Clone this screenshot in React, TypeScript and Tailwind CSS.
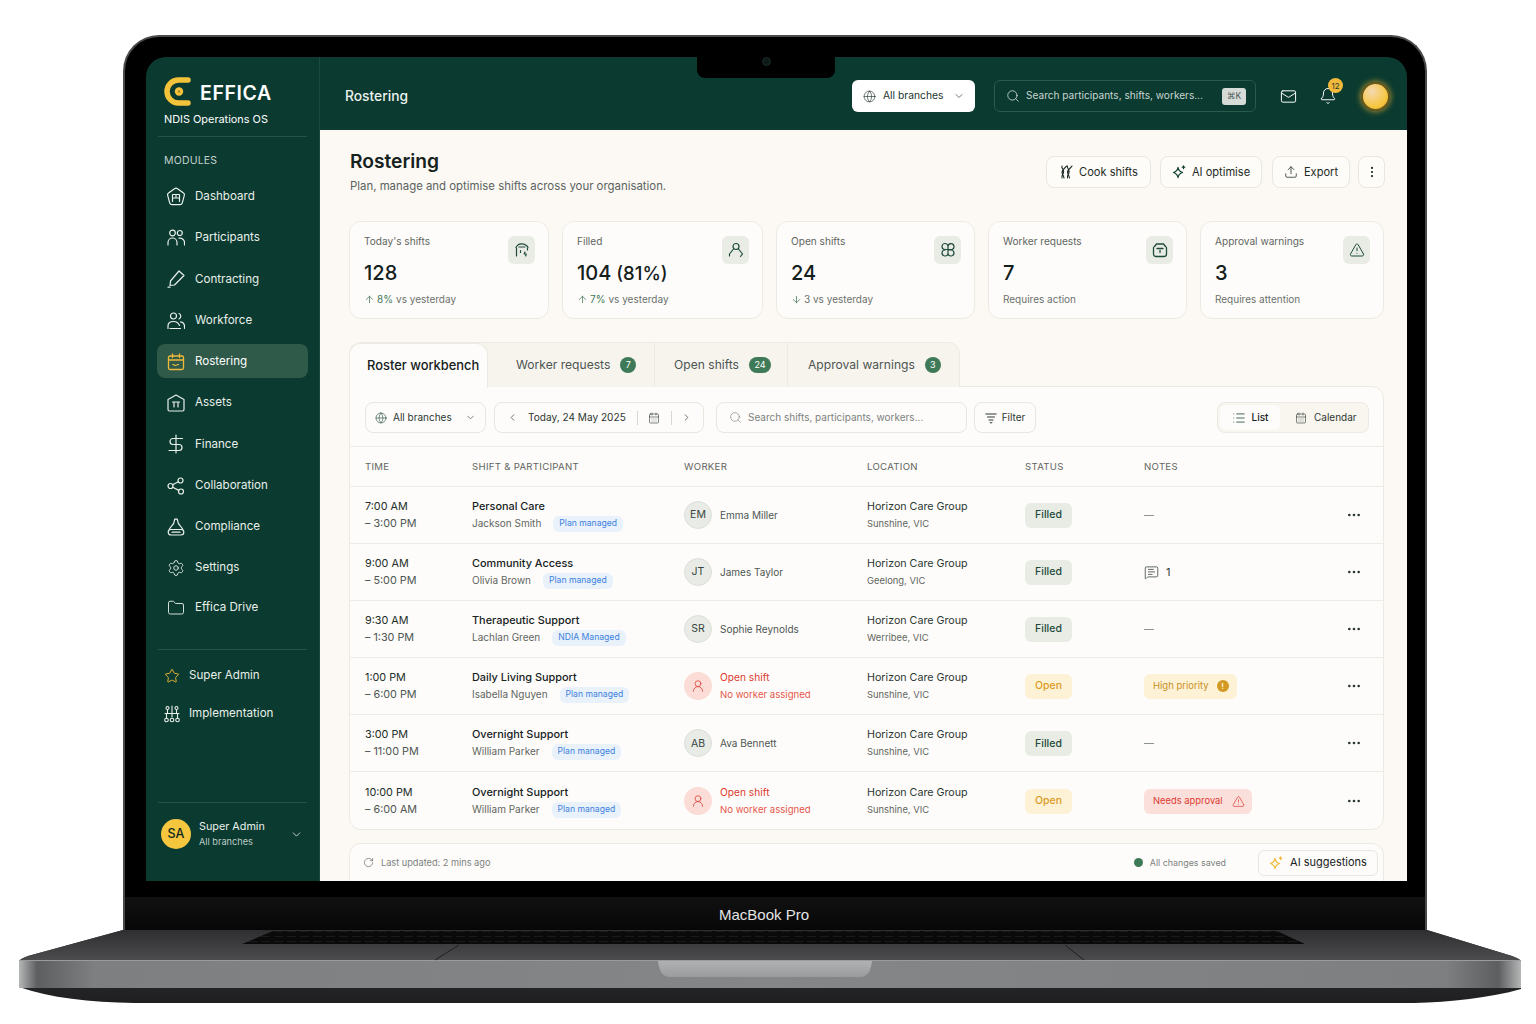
import {
  ArrowDown,
  ArrowUp,
  CalendarDays,
  ChevronDown,
  ChevronLeft,
  ChevronRight,
  EllipsisVertical,
  Folder,
  Globe,
  List,
  Mail,
  Bell,
  MessageSquareText,
  MoreHorizontal,
  RotateCw,
  Search,
  Settings,
  Star,
  TriangleAlert,
  Upload,
  UserRound,
} from 'lucide-react'

const icon = { fill: 'none', stroke: 'currentColor', strokeLinecap: 'round', strokeLinejoin: 'round' } as const

function DashIcon() {
  return (
    <svg width="20" height="20" viewBox="0 0 20 20" strokeWidth="1.2" {...icon}>
      <path d="M8.500 1.800a2.500 2.500 0 0 1 3 0l6 4.300a2 2 0 0 1 .8 2.200l-2 7.500a2.500 2.500 0 0 1-2.400 1.900H6.100a2.500 2.500 0 0 1-2.400-1.900l-2-7.500a2 2 0 0 1 .8-2.200z" />
      <path d="M6.500 14.500V7.500h7v7M6.500 11h7M10 7.500V11" />
    </svg>
  )
}

function PeopleIcon() {
  return (
    <svg width="18" height="18" viewBox="0 0 18 18" strokeWidth="1.2" {...icon}>
      <circle cx="5.500" cy="4" r="2.800" />
      <circle cx="12.800" cy="4" r="2.500" />
      <path d="M1 16v-2.500C1 11 3 9 5.500 9S10 11 10 13.500V16M12 9.200c3 -.4 5.500 1.600 5.500 4.300V16" />
    </svg>
  )
}

function PenIcon() {
  return (
    <svg width="18" height="18" viewBox="0 0 18 18" strokeWidth="1.2" {...icon}>
      <path d="m12 1 5 4.500-9.500 9.500-4.500.5.500-4.500z" />
      <path d="M1 17.200h2" />
    </svg>
  )
}

function WorkforceIcon() {
  return (
    <svg width="18" height="18" viewBox="0 0 18 18" strokeWidth="1.2" {...icon}>
      <circle cx="6.500" cy="4" r="3" />
      <path d="M12 1.500a3 3 0 0 1 0 5.500M1 16.500v-2.500C1 11 3.500 9.500 6.500 9.500s5 1.500 6 4M3 16.500h10.500M13.500 9.800c2.500.5 4 2 4 4.500v2" />
    </svg>
  )
}

function RosterIcon() {
  return (
    <svg width="18" height="18" viewBox="0 0 18 18" strokeWidth="1.3" {...icon}>
      <rect x="1.500" y="3" width="15" height="13.500" rx="1.500" />
      <path d="M1.500 7h15M5.500 1v3.500M12.500 1v3.500M6 11.500l2 1 3.500-1" />
    </svg>
  )
}

function AssetIcon() {
  return (
    <svg width="18" height="18" viewBox="0 0 18 18" strokeWidth="1.2" {...icon}>
      <path d="M9 1 17 5.500V15.500a1.500 1.500 0 0 1-1.500 1.500h-13A1.500 1.500 0 0 1 1 15.500V5.500z" />
      <path d="M5.500 8h7M7 8v5M11 8v5" />
    </svg>
  )
}

function FinanceIcon() {
  return (
    <svg width="18" height="20" viewBox="0 0 18 20" strokeWidth="1.2" {...icon}>
      <path d="M15.500 4.500H6a3 3 0 0 0 0 6h6a3 3 0 0 1 0 6H2M9 1v18" />
    </svg>
  )
}

function CollabIcon() {
  return (
    <svg width="18" height="18" viewBox="0 0 18 18" strokeWidth="1.2" {...icon}>
      <circle cx="3.500" cy="9" r="2.500" />
      <circle cx="13.500" cy="3.500" r="2.500" />
      <circle cx="14" cy="14.500" r="2.500" />
      <path d="m5.700 7.800 5.600-3.100M5.700 10.200l6.100 3.200" />
    </svg>
  )
}

function BellFlaskIcon() {
  return (
    <svg width="18" height="18" viewBox="0 0 18 18" strokeWidth="1.2" {...icon}>
      <path d="M9 .8C7.800.8 7.300 1.800 7.300 3c0 3.800-4.300 5.500-5 8.500h13.400c-.7-3-5-4.700-5-8.500C10.700 1.800 10.200.8 9 .8z" />
      <rect x="1.200" y="11.500" width="15.600" height="5.500" rx="2.700" />
      <path d="M5 14.200h8" />
    </svg>
  )
}

function NodesIcon() {
  return (
    <svg width="16" height="18" viewBox="0 0 16 18" strokeWidth="1.1" {...icon}>
      <circle cx="3.500" cy="3" r="1.500" />
      <circle cx="12.500" cy="3" r="1.500" />
      <circle cx="2.500" cy="15" r="1.800" />
      <circle cx="8" cy="15" r="1.800" />
      <circle cx="13.500" cy="15" r="1.800" />
      <path d="M8 1v11M1 8.500h14M3.500 5v3.500M12.500 5v3.500M2.500 8.500v4.700M13.500 8.500v4.700" />
    </svg>
  )
}

function CookIcon() {
  return (
    <svg width="14" height="14" viewBox="0 0 14 14" strokeWidth="1.100" {...icon}>
      <path d="M3 1c-1.200 2.500 2.500 3.500 1.500 6.500C4 9.500 2.500 10.500 3 13M7.500 1C6.500 3 3 4.500 3 7c0 2 1.500 3.500 2 6M8.500 1c-1 2.500 2.500 3.500 1.500 6.500-.5 2-2 3-1.500 5.500M13 1c-1 2-4.500 3.500-4.500 6 0 2 1.500 3.500 2 6" />
    </svg>
  )
}

function Sparkle({ className }: { className?: string }) {
  return (
    <svg width="14" height="14" viewBox="0 0 14 14" className={className} strokeWidth="1.300" {...icon}>
      <path d="M6 2.500C6.500 5.500 7.500 6.500 10.500 7.500 7.500 8.500 6.500 9.500 6 12.500 5.500 9.500 4.500 8.500 1.500 7.500 4.500 6.500 5.500 5.500 6 2.500z" />
      <path d="M11.500 1v2.500M10.300 2.200h2.400" />
    </svg>
  )
}

function ShiftTileIcon() {
  return (
    <svg width="16" height="16" viewBox="0 0 16 16" strokeWidth="1.200" {...icon}>
      <path d="M2 5.500c.5-2 2-2 2.500-3 1-.8 5-.8 6.500 0 .5 1 2.500 1 3 3M2.500 6v8M13.500 6v2M5 5h6M11 10l-.8 2h2l-.5 2M6.500 8.500v2" />
    </svg>
  )
}

function FilledTileIcon() {
  return (
    <svg width="16" height="16" viewBox="0 0 16 16" strokeWidth="1.200" {...icon}>
      <circle cx="8" cy="4.500" r="3" />
      <path d="M5.500 7 1.500 12v2M10.500 7l4 5-2 2.500" />
    </svg>
  )
}

function OpenTileIcon() {
  return (
    <svg width="16" height="16" viewBox="0 0 16 16" strokeWidth="1.200" {...icon}>
      <path d="M8 8V4.500a3 3 0 1 0-3 3h7a3 3 0 1 0-4-3M8 8v3.500a3 3 0 1 1-3-3.500M8 8h3a3 3 0 1 1-3 3.500" />
    </svg>
  )
}

function RequestTileIcon() {
  return (
    <svg width="16" height="16" viewBox="0 0 16 16" strokeWidth="1.300" {...icon}>
      <path d="M4.500 2h7l2 2.500a1.500 1.500 0 0 1 1 1.500v6a2.500 2.500 0 0 1-2.500 2.500H4A2.500 2.500 0 0 1 1.500 12V6a1.500 1.500 0 0 1 1-1.500z" />
      <path d="M5 6.500h6M8 8.500v2" />
    </svg>
  )
}

const navItems = [
  { label: 'Dashboard', icon: <DashIcon />, h: 'h-[41.3px]' },
  { label: 'Participants', icon: <PeopleIcon />, h: 'h-[41.3px]' },
  { label: 'Contracting', icon: <PenIcon />, h: 'h-[41.3px]' },
  { label: 'Workforce', icon: <WorkforceIcon />, h: 'h-[41.3px]' },
  { label: 'Rostering', icon: <RosterIcon />, h: 'h-[41.3px]', active: true },
  { label: 'Assets', icon: <AssetIcon />, h: 'h-[41.3px]' },
  { label: 'Finance', icon: <FinanceIcon />, h: 'h-[41.3px]' },
  { label: 'Collaboration', icon: <CollabIcon />, h: 'h-[41.3px]' },
  { label: 'Compliance', icon: <BellFlaskIcon />, h: 'h-[41.3px]' },
  { label: 'Settings', icon: <Settings size={18} strokeWidth={1.2} />, h: 'h-[40px]' },
  { label: 'Effica Drive', icon: <Folder size={18} strokeWidth={1.2} />, h: 'h-[40px]' },
]

const stats = [
  { title: "Today's shifts", value: '128', suffix: '', icon: <ShiftTileIcon />, dir: 'up', delta: '8%', note: 'vs yesterday', w: 'w-[200px]' },
  { title: 'Filled', value: '104', suffix: ' (81%)', icon: <FilledTileIcon />, dir: 'up', delta: '7%', note: 'vs yesterday', w: 'w-[201px]' },
  { title: 'Open shifts', value: '24', suffix: '', icon: <OpenTileIcon />, dir: 'down', delta: '', note: '3 vs yesterday', w: 'w-[199px]' },
  { title: 'Worker requests', value: '7', suffix: '', icon: <RequestTileIcon />, dir: '', delta: '', note: 'Requires action', w: 'w-[199px]' },
  { title: 'Approval warnings', value: '3', suffix: '', icon: <TriangleAlert size={16} strokeWidth={1.5} />, dir: '', delta: '', note: 'Requires attention', w: 'w-[184px]' },
]

const rows = [
  { from: '7:00 AM', to: '3:00 PM', shift: 'Personal Care', who: 'Jackson Smith', plan: 'Plan managed', initials: 'EM', worker: 'Emma Miller', city: 'Sunshine, VIC', status: 'Filled', note: 'dash' },
  { from: '9:00 AM', to: '5:00 PM', shift: 'Community Access', who: 'Olivia Brown', plan: 'Plan managed', initials: 'JT', worker: 'James Taylor', city: 'Geelong, VIC', status: 'Filled', note: 'comment' },
  { from: '9:30 AM', to: '1:30 PM', shift: 'Therapeutic Support', who: 'Lachlan Green', plan: 'NDIA Managed', initials: 'SR', worker: 'Sophie Reynolds', city: 'Werribee, VIC', status: 'Filled', note: 'dash' },
  { from: '1:00 PM', to: '6:00 PM', shift: 'Daily Living Support', who: 'Isabella Nguyen', plan: 'Plan managed', initials: '', worker: '', city: 'Sunshine, VIC', status: 'Open', note: 'priority' },
  { from: '3:00 PM', to: '11:00 PM', shift: 'Overnight Support', who: 'William Parker', plan: 'Plan managed', initials: 'AB', worker: 'Ava Bennett', city: 'Sunshine, VIC', status: 'Filled', note: 'dash' },
  { from: '10:00 PM', to: '6:00 AM', shift: 'Overnight Support', who: 'William Parker', plan: 'Plan managed', initials: '', worker: '', city: 'Sunshine, VIC', status: 'Open', note: 'approval' },
]

function Sidebar() {
  return (
    <aside className="w-[174px] shrink-0 bg-[#0a3a30] border-r border-[#1d4a40] flex flex-col text-[#e9efe9]">
      <div className="pl-[18px] pt-[19px]">
        <div className="flex items-center gap-[9px]">
          <svg width="27" height="31" viewBox="0 0 27 31" fill="none">
            <path d="M24 4H14.500a11 11 0 0 0 0 23H24" stroke="#f5c33b" strokeWidth="5.500" strokeLinecap="round" />
            <circle cx="15" cy="15.500" r="4.200" fill="#f5c33b" />
            <circle cx="15" cy="15.500" r="1.300" fill="#b9851d" />
          </svg>
          <span className="text-[19.5px] leading-none font-semibold tracking-[0.6px] text-white mt-[5px]">EFFICA</span>
        </div>
        <div className="text-[10.9px] leading-4 mt-[4px] text-white">NDIS Operations OS</div>
      </div>
      <div className="mx-3 mt-[9px] border-t border-[#25524a]" />
      <div className="pl-[18px] mt-[18px] text-[10.5px] leading-3 tracking-[0.2px] text-[#c3d1cb]">MODULES</div>
      <nav className="mt-[9px] px-[11px]">
        {navItems.map(item => (
          <div key={item.label} className={`${item.h} flex items-center`}>
            <div
              className={`w-[151px] h-[34px] flex items-center gap-[9px] pl-[9px] rounded-lg text-[11.6px] ${
                item.active ? 'bg-[#2f5a4a] text-white -mt-[2px] pt-[2px]' : 'text-[#e9efe9]'
              }`}
            >
              <span className={`w-[20px] flex justify-center ${item.active ? 'text-[#f0b93a]' : ''}`}>{item.icon}</span>
              {item.label}
            </div>
          </div>
        ))}
      </nav>
      <div className="mx-3 mt-[21px] border-t border-[#25524a]" />
      <div className="px-[18px] mt-[7px] text-[11.6px]">
        <div className="h-[38px] flex items-center gap-[9px]">
          <Star size={16} strokeWidth={1.4} className="text-[#f0b93a]" />
          Super Admin
        </div>
        <div className="h-[38px] flex items-center gap-[9px]">
          <NodesIcon />
          Implementation
        </div>
      </div>
      <div className="mt-auto mx-3 border-t border-[#25524a]" />
      <div className="h-[78px] flex items-center pl-[15px] pr-[16px] pb-[16px]">
        <div className="w-[30px] h-[30px] rounded-full bg-[#f6c63f] text-[#10261f] text-[12.5px] font-medium flex items-center justify-center">SA</div>
        <div className="ml-[8px] flex-1">
          <div className="text-[10.8px] leading-[15px]">Super Admin</div>
          <div className="text-[9.2px] leading-[15px] text-[#bccbc5]">All branches</div>
        </div>
        <ChevronDown size={13} strokeWidth={1.5} />
      </div>
    </aside>
  )
}

function TopBar() {
  return (
    <header className="h-[73px] shrink-0 bg-[#0a3a30] flex items-center pl-[25px] pt-[5px] text-white">
      <div className="text-[13.8px] font-medium text-[#edf2ee]">Rostering</div>
      <div className="ml-auto flex items-center">
        <button className="w-[123px] h-[32px] bg-white rounded-md flex items-center pl-[11px] text-[10.3px] text-[#23352e]">
          <Globe size={13} strokeWidth={1.2} />
          <span className="ml-[7px]">All branches</span>
          <ChevronDown size={12} strokeWidth={1.3} className="ml-[10px]" />
        </button>
        <div className="ml-[19px] w-[262px] h-[32px] rounded-md border border-[#2c5a4e] flex items-center pl-[11px] pr-[9px] text-[10.1px] text-[#c9d6d0]">
          <Search size={14} strokeWidth={1.3} className="text-[#e6ece8]" />
          <span className="ml-[6px]">Search participants, shifts, workers...</span>
          <span className="ml-auto w-[24px] h-[17px] bg-[#d6dbd7] rounded-[3px] text-[8.5px] text-[#4f5a55] flex items-center justify-center">⌘K</span>
        </div>
        <Mail size={17} strokeWidth={1.4} className="ml-[24px]" />
        <div className="relative ml-[22px]">
          <Bell size={18} strokeWidth={1.3} />
          <span className="absolute -top-[9px] left-[9px] w-[15px] h-[15px] rounded-full bg-[#f2b93b] text-[#263b2c] text-[8px] flex items-center justify-center">12</span>
        </div>
        <div className="ml-[24px] mr-[17px] w-[29px] h-[29px] rounded-full border-2 border-[#6c5a1c] bg-[radial-gradient(circle_at_35%_30%,#f6d9b0,#f6c63f_65%,#e8b12c)] shadow-[0_0_6px_#c9a02f]" />
      </div>
    </header>
  )
}

function PageHeader() {
  return (
    <div className="flex items-start pl-[1px]">
      <div>
        <h1 className="text-[19.2px] leading-[26px] font-semibold text-[#16221d]">Rostering</h1>
        <p className="mt-[4px] text-[11.4px] leading-4 text-[#5a635f]">Plan, manage and optimise shifts across your organisation.</p>
      </div>
      <div className="ml-auto -mr-px flex text-[11.1px] text-[#1d2b26] mt-[8px]">
        <button className="w-[105px] h-[32px] border border-[#e9e6df] rounded-lg bg-[#fefcf9] flex items-center justify-center gap-[6px]">
          <CookIcon />
          Cook shifts
        </button>
        <button className="ml-[9px] w-[102px] h-[32px] border border-[#e9e6df] rounded-lg bg-[#fefcf9] flex items-center justify-center gap-[6px]">
          <Sparkle className="text-[#0f4034]" />
          AI optimise
        </button>
        <button className="ml-[10px] w-[78px] h-[32px] border border-[#e9e6df] rounded-lg bg-[#fefcf9] flex items-center justify-center gap-[6px]">
          <Upload size={14} strokeWidth={1.3} />
          Export
        </button>
        <button className="ml-[8px] w-[27px] h-[32px] border border-[#e9e6df] rounded-lg bg-[#fefcf9] flex items-center justify-center">
          <EllipsisVertical size={14} strokeWidth={1.8} />
        </button>
      </div>
    </div>
  )
}

function StatCards() {
  return (
    <div className="mt-[27px] flex gap-[13px]">
      {stats.map(s => (
        <div key={s.title} className={`${s.w} h-[98px] border border-[#ecebe3] rounded-xl bg-[#fefcfa] pl-[14px] pr-[13px] pt-[13px] flex`}>
          <div className="flex-1">
            <div className="text-[10.1px] leading-[12px] text-[#5f6661]">{s.title}</div>
            <div className="mt-[13px] text-[20px] leading-[26px] font-medium text-[#14201b]">
              {s.value}
              {s.suffix && <span className="text-[18.5px]">{s.suffix}</span>}
            </div>
            <div className="mt-[6px] text-[10px] leading-[14px] text-[#6b726e] flex items-center">
              {s.dir === 'up' && <ArrowUp size={11} strokeWidth={1.5} className="text-[#2f6a4a] mr-[2px]" />}
              {s.dir === 'down' && <ArrowDown size={11} strokeWidth={1.5} className="text-[#2f6a4a] mr-[2px]" />}
              {s.delta && <span className="text-[#3f7a58] mr-[3px]">{s.delta}</span>}
              {s.note}
            </div>
          </div>
          <div className="mt-[1px] w-[27px] h-[28px] rounded-md bg-[#e9ece5] text-[#1e4a3c] flex items-center justify-center">{s.icon}</div>
        </div>
      ))}
    </div>
  )
}

function Tabs() {
  return (
    <div className="mt-[23px] w-[611px] h-[45px] flex bg-[#f7f3ed] border border-b-0 border-[#ecebe3] rounded-t-xl relative z-10 text-[12.1px] text-[#4d5652]">
      <div className="w-[139px] -ml-px h-[45px] bg-[#fefcfa] border border-b-0 border-[#ecebe3] rounded-t-xl flex items-center pl-[17px] text-[12.9px] font-medium text-[#15211c]">Roster workbench</div>
      <div className="w-[167px] flex items-center pl-[28px] border-r border-[#ecebe3]">
        Worker requests
        <span className="ml-[10px] w-[16px] h-[16px] rounded-full bg-[#3f7a58] text-white text-[9px] flex items-center justify-center">7</span>
      </div>
      <div className="w-[133px] flex items-center pl-[19px] border-r border-[#ecebe3]">
        Open shifts
        <span className="ml-[10px] w-[22px] h-[16px] rounded-full bg-[#3f7a58] text-white text-[9px] flex items-center justify-center">24</span>
      </div>
      <div className="flex-1 flex items-center pl-[20px]">
        Approval warnings
        <span className="ml-[10px] w-[16px] h-[16px] rounded-full bg-[#3f7a58] text-white text-[9px] flex items-center justify-center">3</span>
      </div>
    </div>
  )
}

function Toolbar() {
  return (
    <div className="h-[60px] flex items-center pl-[15px] pr-[14px] pt-[2px] border-b border-[#eeece5] text-[10px] text-[#2c3833]">
      <div className="w-[121px] h-[31px] border border-[#e9e6df] rounded-lg flex items-center pl-[9px] bg-[#fefcfa]">
        <Globe size={12} strokeWidth={1.2} className="text-[#1e4a3c]" />
        <span className="ml-[6px]">All branches</span>
        <ChevronDown size={11} strokeWidth={1.3} className="ml-[13px]" />
      </div>
      <div className="ml-[8px] w-[210px] h-[31px] border border-[#e9e6df] rounded-lg flex items-center pl-[12px] bg-[#fefcfa]">
        <ChevronLeft size={11} strokeWidth={1.5} />
        <span className="ml-[10px] text-[10.1px]">Today, 24 May 2025</span>
        <span className="ml-[11px] h-[14px] border-l border-[#d9d7d0]" />
        <CalendarDays size={12} strokeWidth={1.2} className="ml-[10px]" />
        <span className="ml-[11px] h-[14px] border-l border-[#d9d7d0]" />
        <ChevronRight size={11} strokeWidth={1.5} className="ml-[9px]" />
      </div>
      <div className="ml-[12px] w-[251px] h-[31px] border border-[#e9e6df] rounded-lg flex items-center pl-[12px] text-[#7b827e] bg-[#fefcfa]">
        <Search size={13} strokeWidth={1.2} />
        <span className="ml-[6px]">Search shifts, participants, workers...</span>
      </div>
      <div className="ml-[7px] w-[62px] h-[31px] border border-[#e9e6df] rounded-lg flex items-center justify-center gap-[5px] bg-[#fefcfa]">
        <svg width="12" height="12" viewBox="0 0 12 12" strokeWidth="1" {...icon}>
          <path d="M.8 2h10.400M2.500 5h7M4 8h4M5 10.500l1 .6 1-.6" />
        </svg>
        Filter
      </div>
      <div className="ml-auto w-[152px] h-[31px] border border-[#ecebe3] rounded-lg bg-[#f9f5ef] flex items-center px-[2px]">
        <div className="w-[60px] h-[25px] bg-[#fefcfa] rounded-md flex items-center justify-center gap-[6px] font-medium text-[#15211c]">
          <List size={14} strokeWidth={1.4} className="text-[#1e4a3c]" />
          List
        </div>
        <div className="ml-[15px] flex items-center gap-[7px]">
          <CalendarDays size={12} strokeWidth={1.2} />
          Calendar
        </div>
      </div>
    </div>
  )
}

const gridCols = 'grid grid-cols-[107px_212px_183px_158px_119px_1fr_40px] items-center pl-[15px] pr-[9px]'

function Note({ kind }: { kind: string }) {
  if (kind === 'comment') {
    return (
      <div className="flex items-center gap-[7px] text-[11px] text-[#2c3833]">
        <MessageSquareText size={15} strokeWidth={1.2} />1
      </div>
    )
  }
  if (kind === 'priority') {
    return (
      <div className="w-[93px] h-[25px] rounded-md bg-[#fdf2d5] text-[#c9901f] text-[9.5px] flex items-center pl-[9px] gap-[8px]">
        High priority
        <span className="w-[12px] h-[12px] rounded-full bg-[#d29a24] text-[#fdf2d5] text-[8px] font-bold flex items-center justify-center">!</span>
      </div>
    )
  }
  if (kind === 'approval') {
    return (
      <div className="w-[108px] h-[25px] rounded-md bg-[#fbdfdb] text-[#dc3b31] text-[9.4px] flex items-center pl-[9px] gap-[9px]">
        Needs approval
        <TriangleAlert size={13} strokeWidth={1.3} />
      </div>
    )
  }
  return <div className="w-[10px] border-t border-[#8d938f]" />
}

function Table() {
  return (
    <div>
      <div className={`${gridCols} h-[40px] pt-[2px] border-b border-[#eeece5] text-[9.6px] tracking-[0.3px] text-[#5f6661]`}>
        <div>TIME</div>
        <div>SHIFT &amp; PARTICIPANT</div>
        <div>WORKER</div>
        <div>LOCATION</div>
        <div>STATUS</div>
        <div>NOTES</div>
        <div />
      </div>
      {rows.map((r, i) => (
        <div key={i} className={`${gridCols} h-[57.1px] ${i < rows.length - 1 ? 'border-b border-[#eeece5]' : ''}`}>
          <div className="text-[10.8px] leading-[17px] text-[#222e29]">
            <div>{r.from}</div>
            <div className="text-[#4d5652]">– {r.to}</div>
          </div>
          <div className="leading-[17px]">
            <div className="text-[10.9px] font-medium text-[#16221d]">{r.shift}</div>
            <div className="flex items-center text-[10px] text-[#5f6661]">
              {r.who}
              <span className="ml-[12px] h-[16px] px-[6px] rounded-md bg-[#e9f1fb] text-[#3c82dd] text-[8.6px] flex items-center">{r.plan}</span>
            </div>
          </div>
          <div className="flex items-center">
            {r.initials ? (
              <>
                <div className="w-[28px] h-[28px] rounded-full bg-[#e9ece6] border border-[#dcdfd9] text-[10.5px] text-[#39443f] flex items-center justify-center">{r.initials}</div>
                <div className="ml-[8px] text-[10px] text-[#4d5652]">{r.worker}</div>
              </>
            ) : (
              <>
                <div className="w-[28px] h-[28px] rounded-full bg-[#fbdcd7] text-[#dc3b31] flex items-center justify-center">
                  <UserRound size={14} strokeWidth={1.3} />
                </div>
                <div className="ml-[8px] leading-[17px] text-[#dc3b31]">
                  <div className="text-[10.2px]">Open shift</div>
                  <div className="text-[9.6px] text-[#e4574d]">No worker assigned</div>
                </div>
              </>
            )}
          </div>
          <div className="leading-[17px]">
            <div className="text-[10.7px] text-[#2c3833]">Horizon Care Group</div>
            <div className="text-[9.4px] text-[#5f6661]">{r.city}</div>
          </div>
          <div>
            {r.status === 'Filled' ? (
              <span className="w-[47px] h-[25px] rounded-md bg-[#e8ece5] text-[#1e4a3c] text-[10.5px] font-medium flex items-center justify-center">Filled</span>
            ) : (
              <span className="w-[47px] h-[25px] rounded-md bg-[#fdf2d5] text-[#dc9a1e] text-[10.5px] font-medium flex items-center justify-center">Open</span>
            )}
          </div>
          <div>
            <Note kind={r.note} />
          </div>
          <div className="flex justify-center text-[#2c3833]">
            <MoreHorizontal size={16} strokeWidth={2} />
          </div>
        </div>
      ))}
    </div>
  )
}

function Footer() {
  return (
    <div className="mt-[13px] h-[40px] shrink-0 border border-b-0 border-[#ecebe3] rounded-t-xl bg-[#fefcfa] flex items-center pl-[13px] pr-[5px] pb-[2px] text-[9.2px] text-[#7b827e]">
      <RotateCw size={11} strokeWidth={1.3} className="text-[#4d5652]" />
      <span className="ml-[7px]">Last updated: 2 mins ago</span>
      <span className="ml-auto w-[9px] h-[9px] rounded-full bg-[#3f7a58]" />
      <span className="ml-[7px] text-[8.9px]">All changes saved</span>
      <div className="ml-[32px] w-[120px] h-[26px] border border-[#e9e6df] rounded-md flex items-center justify-center gap-[7px] text-[11px] text-[#16221d]">
        <Sparkle className="text-[#f0b93a]" />
        AI suggestions
      </div>
    </div>
  )
}

function Notch() {
  return (
    <div className="absolute left-[572px] top-[20px] w-[138px] h-[21px] bg-black rounded-b-lg flex justify-center z-20">
      <span className="w-[9px] h-[9px] rounded-full bg-[#0d1a18] border border-[#1d2a28]" />
    </div>
  )
}

function LaptopBase() {
  return (
    <svg width="1536" height="74" viewBox="0 0 1536 74" className="block">
      <defs>
        <linearGradient id="deck" x1="0" y1="0" x2="0" y2="1">
          <stop offset="0" stopColor="#2e2e30" />
          <stop offset="1" stopColor="#4d4d4f" />
        </linearGradient>
        <linearGradient id="front" x1="0" y1="0" x2="1" y2="0">
          <stop offset="0" stopColor="#b5b6b6" />
          <stop offset="0.012" stopColor="#5d5e60" />
          <stop offset="0.05" stopColor="#7e7f81" />
          <stop offset="0.5" stopColor="#858688" />
          <stop offset="0.95" stopColor="#7e7f81" />
          <stop offset="0.985" stopColor="#5d5e60" />
          <stop offset="1" stopColor="#b5b6b6" />
        </linearGradient>
        <linearGradient id="under" x1="0" y1="0" x2="0" y2="1">
          <stop offset="0" stopColor="#38383a" />
          <stop offset="1" stopColor="#1f1f21" />
        </linearGradient>
        <linearGradient id="thumb" x1="0" y1="0" x2="0" y2="1">
          <stop offset="0" stopColor="#b0b1b2" />
          <stop offset="1" stopColor="#9a9b9c" />
        </linearGradient>
        <pattern id="keys" width="13" height="5" patternUnits="userSpaceOnUse">
          <rect width="13" height="5" fill="#0a0a0b" />
          <rect x="1" y="1" width="9" height="1" fill="#1a1a1d" />
        </pattern>
      </defs>
      <path d="M123 0H1427L1512 26Q1520 29 1521 31V58L1521 59C1490 68 1450 72 1414 73H134C90 72 50 68 19 57V31Q20 29 28 26Z" fill="url(#under)" />
      <path d="M123 0H1427L1512 26Q1520 29 1521 31H19Q20 29 28 26Z" fill="url(#deck)" />
      <rect x="19" y="31" width="1502" height="27" fill="url(#front)" />
      <rect x="19" y="30" width="1502" height="1" fill="#9a9b9c" />
      <path d="M273 1H1277L1305 14H242Z" fill="url(#keys)" />
      <path d="M459 15 435 30M1065 15 1084 30" stroke="#1e1e20" strokeWidth="1" />
      <path d="M658 31H872C871 40 868 47 860 47H670C662 47 659 40 658 31Z" fill="url(#thumb)" />
    </svg>
  )
}

export default function App() {
  return (
    <div className="w-[1536px] h-[1024px] bg-white overflow-hidden pt-[35px] font-['Inter',sans-serif]">
      <div className="relative ml-[123px] w-[1304px] h-[895px] bg-black rounded-t-[36px] border-t-[2px] border-x-[2px] border-[#4a4a4c] pt-[20px] pl-[21px] pr-[18px]">
        <Notch />
        <div className="w-[1261px] h-[824px] flex rounded-t-[20px] overflow-hidden">
          <Sidebar />
          <div className="flex-1 flex flex-col min-w-0">
            <TopBar />
            <main className="flex-1 min-h-0 bg-[#fcf8f3] pl-[29px] pr-[23px] pt-[18px] flex flex-col overflow-hidden">
              <PageHeader />
              <StatCards />
              <Tabs />
              <div className="-mt-px h-[444px] shrink-0 border border-[#ecebe3] rounded-b-xl rounded-tr-xl bg-[#fefcfa]">
                <Toolbar />
                <Table />
              </div>
              <Footer />
            </main>
          </div>
        </div>
        <div className="absolute left-0 right-0 bottom-0 h-[33px] bg-[linear-gradient(#111112,#070708)] flex items-center justify-center pr-[22px] pt-[4px] text-[15px] text-[#e4e4e4] font-['Liberation_Sans',sans-serif]">
          MacBook Pro
        </div>
      </div>
      <LaptopBase />
    </div>
  )
}
